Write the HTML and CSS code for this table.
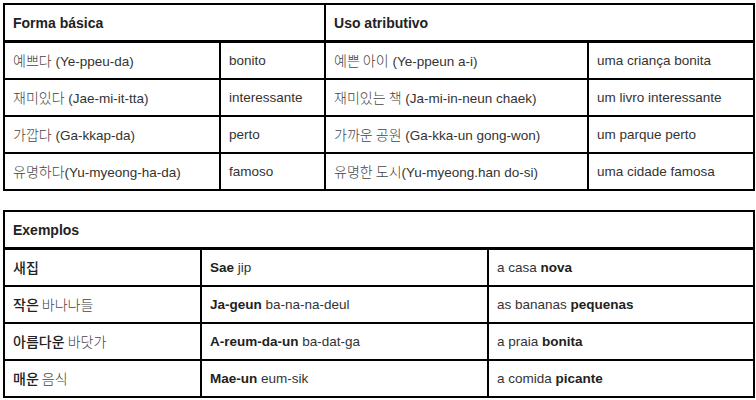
FILE: index.html
```html
<!DOCTYPE html>
<html lang="pt">
<head>
<meta charset="utf-8">
<link rel="stylesheet" href="styles.css">
</head>
<body>
<div class="page">
  <table class="grid grid-forms">
    <colgroup>
      <col class="c1"><col class="c2"><col class="c3"><col class="c4">
    </colgroup>
    <thead>
      <tr><th colspan="2">Forma básica</th><th colspan="2">Uso atributivo</th></tr>
    </thead>
    <tbody>
      <tr><td><span class="ko">예쁘다</span> (Ye-ppeu-da)</td><td>bonito</td><td><span class="ko">예쁜 아이</span> (Ye-ppeun a-i)</td><td>uma criança bonita</td></tr>
      <tr><td><span class="ko">재미있다</span> (Jae-mi-it-tta)</td><td>interessante</td><td><span class="ko">재미있는 책</span> (Ja-mi-in-neun chaek)</td><td>um livro interessante</td></tr>
      <tr><td><span class="ko">가깝다</span> (Ga-kkap-da)</td><td>perto</td><td><span class="ko">가까운 공원</span> (Ga-kka-un gong-won)</td><td>um parque perto</td></tr>
      <tr><td><span class="ko">유명하다</span>(Yu-myeong-ha-da)</td><td>famoso</td><td><span class="ko">유명한 도시</span>(Yu-myeong.han do-si)</td><td>uma cidade famosa</td></tr>
    </tbody>
  </table>

  <table class="grid grid-examples">
    <colgroup>
      <col class="e1"><col class="e2"><col class="e3">
    </colgroup>
    <thead>
      <tr><th colspan="3">Exemplos</th></tr>
    </thead>
    <tbody>
      <tr><td><span class="ko"><b>새집</b></span></td><td><b>Sae</b> jip</td><td>a casa <b>nova</b></td></tr>
      <tr><td><span class="ko"><b>작은</b> 바나나들</span></td><td><b>Ja-geun</b> ba-na-na-deul</td><td>as bananas <b>pequenas</b></td></tr>
      <tr><td><span class="ko"><b>아름다운</b> 바닷가</span></td><td><b>A-reum-da-un</b> ba-dat-ga</td><td>a praia <b>bonita</b></td></tr>
      <tr><td><span class="ko"><b>매운</b> 음식</span></td><td><b>Mae-un</b> eum-sik</td><td>a comida <b>picante</b></td></tr>
    </tbody>
  </table>
</div>
</body>
</html>
```

FILE: styles.css
```css
html, body {
  margin: 0;
  padding: 0;
  background: #ffffff;
}

.page {
  padding: 3px 0 0 3px;
  display: flex;
  flex-direction: column;
  gap: 19px;
  font-family: "Liberation Sans", Arial, "Noto Sans CJK KR", sans-serif;
  font-size: 13.5px;
  color: #333333;
}

.grid {
  border-collapse: collapse;
  table-layout: fixed;
  width: 750px;
}

.grid th,
.grid td {
  border: 2px solid #000000;
  padding: 0 8px;
  height: 35px;
  line-height: 16px;
  text-align: left;
  vertical-align: middle;
  white-space: nowrap;
}

.grid th {
  font-size: 14px;
  font-weight: bold;
  color: #222222;
  border-bottom-width: 3px;
}

.grid b {
  font-weight: bold;
  color: #222222;
}

.ko {
  font-family: "Noto Sans CJK KR", sans-serif;
  font-size: 14px;
  font-weight: 300;
  color: #444444;
}

.ko b {
  font-weight: 500;
  color: #222222;
}

.c1 { width: 216px; }
.c2 { width: 105px; }
.c3 { width: 263px; }
.c4 { width: 166px; }

.e1 { width: 197px; }
.e2 { width: 287px; }
.e3 { width: 266px; }
```
